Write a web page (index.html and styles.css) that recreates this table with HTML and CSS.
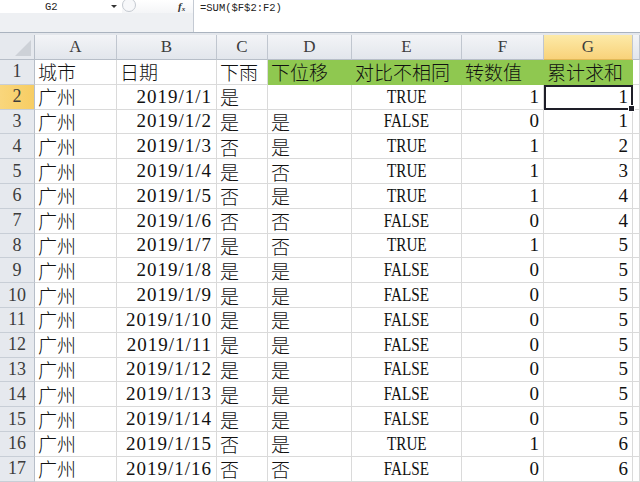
FILE: index.html
```html
<!DOCTYPE html>
<html>
<head>
<meta charset="utf-8">
<link rel="stylesheet" href="styles.css">
</head>
<body>
<div class="fbar">
  <div class="fleft">
    <div class="toprow">
      <div class="namebox"><span class="nm">G2</span><span class="arrow"></span></div>
      <div class="splitter"></div>
      <div class="fx">f<sub>x</sub></div>
    </div>
  </div>
  <div class="formula">=SUM($F$2:F2)</div>
</div>
<div class="gap"></div>
<div class="sheet" id="sheet">
  <div class="corner"></div>
  <div class="ch">A</div><div class="ch">B</div><div class="ch">C</div><div class="ch">D</div><div class="ch">E</div><div class="ch">F</div><div class="ch sel-h">G</div><div class="ch"></div>

  <div class="rh">1</div>
  <div class="c l">城市</div><div class="c l">日期</div><div class="c l">下雨</div>
  <div class="c l g">下位移</div><div class="c l g">对比不相同</div><div class="c l g">转数值</div><div class="c l g">累计求和</div><div class="c"></div>
</div>
<script src="app.js"></script>
</body>
</html>
```
FILE: styles.css
```css
html, body {
  margin: 0;
  padding: 0;
  background: #ffffff;
  overflow: hidden;
  width: 640px;
  height: 482px;
}
.fbar {
  display: flex;
  height: 32px;
  border-bottom: 1px solid #aab3bf;
}
.fleft {
  width: 193px;
  background: #eef0f3;
  border-right: 1px solid #c4cad3;
}
.toprow {
  display: flex;
  align-items: center;
  height: 13px;
  background: linear-gradient(#ffffff, #f4f5f7);
}
.namebox {
  width: 122px;
  height: 13px;
  display: flex;
  align-items: center;
  background: #ffffff;
}
.nm {
  font-family: "Liberation Mono", monospace;
  font-size: 10.5px;
  color: #222;
  margin-left: 45px;
}
.arrow {
  margin-left: 53px;
  width: 0;
  height: 0;
  border-left: 3px solid transparent;
  border-right: 3px solid transparent;
  border-top: 3px solid #333;
}
.splitter {
  width: 14px;
  height: 14px;
  margin-top: -4px;
  border-radius: 50%;
  border: 1px solid #c5cad1;
  background: #f7f8fa;
  box-sizing: border-box;
}
.fx {
  margin-left: 42px;
  font-family: "Liberation Serif", serif;
  font-style: italic;
  font-weight: bold;
  font-size: 11px;
  color: #333;
}
.fx sub {
  font-size: 7px;
  vertical-align: -1px;
}
.formula {
  flex: 1;
  font-family: "Liberation Mono", monospace;
  font-size: 10.5px;
  color: #222;
  padding: 2px 0 0 6px;
}
.gap {
  height: 2px;
  background: #e4e7ec;
}
.sheet {
  display: grid;
  grid-template-columns: 35px 82px 100px 51px 84px 110px 82px 89px 1fr;
  grid-template-rows: 25px;
  grid-auto-rows: 24.8px;
  font-family: "Liberation Serif", "Noto Sans CJK SC", serif;
  font-weight: 300;
  font-size: 19px;
  color: #111;
}
.corner {
  background: #e6e9ee;
  border-right: 1px solid #b7bec8;
  border-bottom: 1px solid #b7bec8;
  position: relative;
}
.corner::after {
  content: "";
  position: absolute;
  right: 3px;
  bottom: 3px;
  width: 0;
  height: 0;
  border-left: 16px solid transparent;
  border-bottom: 16px solid #cdd1d7;
}
.ch {
  background: linear-gradient(#f3f4f7, #e2e6ec);
  border-right: 1px solid #c0c6cf;
  border-bottom: 1px solid #b7bec8;
  display: flex;
  align-items: center;
  justify-content: center;
  font-size: 17px;
  color: #3c3c3c;
}
.ch.sel-h {
  background: linear-gradient(#fdeaa8, #f8d27a);
  border-bottom-color: #e0b858;
}
.rh {
  background: #e6e9ee;
  border-right: 1px solid #b7bec8;
  border-bottom: 1px solid #c8ced6;
  display: flex;
  align-items: center;
  justify-content: center;
  font-size: 18px;
  color: #3c3c3c;
}
.rh.sel-r {
  background: linear-gradient(90deg, #f9d67c, #f7cd63);
}
.c {
  border-right: 1px solid #dadada;
  border-bottom: 1px solid #dadada;
  display: flex;
  align-items: center;
  white-space: nowrap;
  overflow: visible;
}
.c.l {
  justify-content: flex-start;
  padding-left: 3px;
}
.c.r {
  justify-content: flex-end;
  padding-right: 4px;
}
.c.m {
  justify-content: center;
}
.c.g {
  background: #8fc850;
  border-color: #8fc850;
}
.date {
  letter-spacing: 1px;
}
.cond {
  display: inline-block;
  transform: scaleX(0.8);
}
.sel {
  position: relative;
  outline: 2px solid #1e1e28;
  outline-offset: -2px;
}
.sel::after {
  content: "";
  position: absolute;
  right: -3px;
  bottom: -3px;
  width: 5px;
  height: 5px;
  background: #1e1e28;
  border: 1px solid #fff;
}
```
FILE: app.js
```js
var rows = [
  ["2019/1/1", "是", "", "TRUE", 1, 1],
  ["2019/1/2", "是", "是", "FALSE", 0, 1],
  ["2019/1/3", "否", "是", "TRUE", 1, 2],
  ["2019/1/4", "是", "否", "TRUE", 1, 3],
  ["2019/1/5", "否", "是", "TRUE", 1, 4],
  ["2019/1/6", "否", "否", "FALSE", 0, 4],
  ["2019/1/7", "是", "否", "TRUE", 1, 5],
  ["2019/1/8", "是", "是", "FALSE", 0, 5],
  ["2019/1/9", "是", "是", "FALSE", 0, 5],
  ["2019/1/10", "是", "是", "FALSE", 0, 5],
  ["2019/1/11", "是", "是", "FALSE", 0, 5],
  ["2019/1/12", "是", "是", "FALSE", 0, 5],
  ["2019/1/13", "是", "是", "FALSE", 0, 5],
  ["2019/1/14", "是", "是", "FALSE", 0, 5],
  ["2019/1/15", "否", "是", "TRUE", 1, 6],
  ["2019/1/16", "否", "否", "FALSE", 0, 6]
];
var sheet = document.getElementById("sheet");
function cell(cls, html) {
  var d = document.createElement("div");
  d.className = cls;
  d.innerHTML = html;
  sheet.appendChild(d);
}
rows.forEach(function (r, i) {
  var n = i + 2;
  cell(n === 2 ? "rh sel-r" : "rh", String(n));
  cell("c l", "广州");
  cell("c r", '<span class="date">' + r[0] + "</span>");
  cell("c l", r[1]);
  cell("c l", r[2]);
  cell("c m", '<span class="cond">' + r[3] + "</span>");
  cell("c r", String(r[4]));
  cell(n === 2 ? "c r sel" : "c r", String(r[5]));
  cell("c", "");
});
```
